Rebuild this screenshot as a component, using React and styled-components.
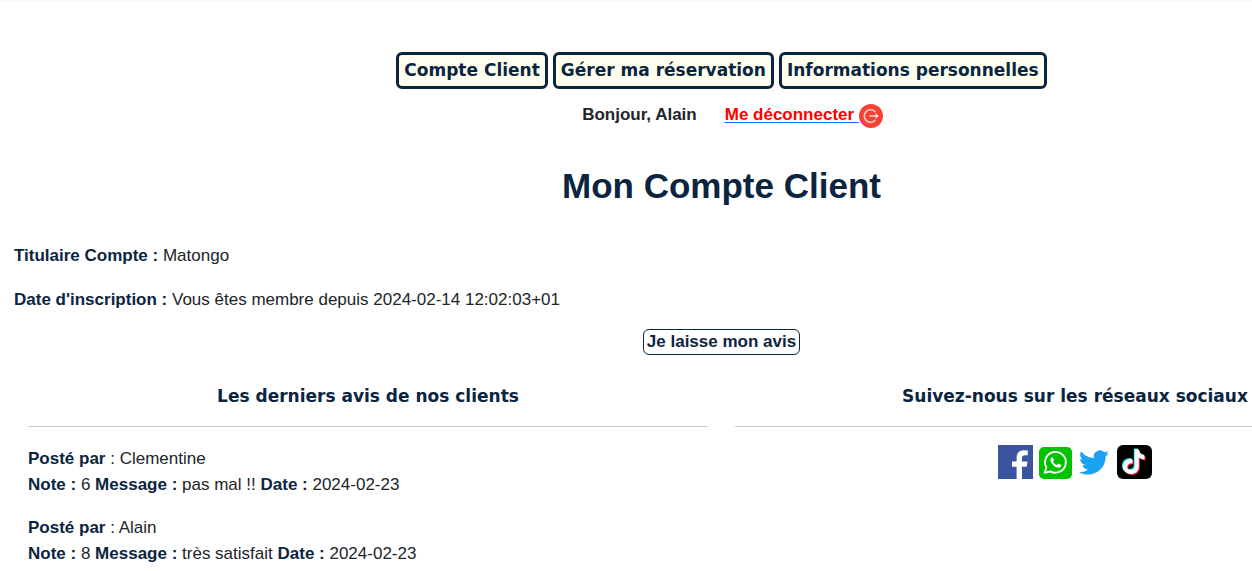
import React from "react";
import styled, { createGlobalStyle } from "styled-components";

const navy = "#0b2540";
const display = '"Arial Black", "DejaVu Sans", sans-serif';

const GlobalStyle = createGlobalStyle`
  *, *::before, *::after { box-sizing: border-box; }
  body {
    margin: 0;
    overflow-x: hidden;
    background: #fff;
    color: #212529;
    font-family: "Liberation Sans", Arial, sans-serif;
    font-size: 17px;
    line-height: 26px;
  }
`;

const Page = styled.div`
  width: calc(100% + 191px);
  border-top: 2px solid #f8f8f8;
  padding: 50px 14px 0;
`;

const Nav = styled.nav`
  display: flex;
  justify-content: center;
  gap: 5px;
`;

const NavButton = styled.button`
  padding: 2px 5px 3px;
  border: 3px solid ${navy};
  border-radius: 6px;
  background: #fffff0;
  color: ${navy};
  font: 900 17px/26px ${display};
`;

const Session = styled.div`
  display: flex;
  justify-content: center;
  align-items: center;
  gap: 28px;
  margin-top: 13px;
  padding-left: 22px;
  font-weight: 700;
`;

const Logout = styled.a`
  display: flex;
  align-items: center;
  color: #f00;
  text-decoration: none;

  span {
    white-space: pre;
    text-decoration: underline #0d6efd 1px;
    text-underline-offset: 2px;
  }

  svg { margin-top: 2px; }
`;

const Title = styled.h1`
  margin: 36px 0 0;
  color: ${navy};
  font-size: 35px;
  line-height: 44px;
  text-align: center;
`;

const Label = styled.strong`
  color: ${navy};
`;

const Details = styled.div`
  display: grid;
  gap: 18px;
  margin-top: 35px;
`;

const Line = styled.p`
  margin: 0;
`;

const ReviewButton = styled.button`
  display: block;
  margin: 16px auto 0;
  padding: 0 3px;
  border: 1px solid ${navy};
  border-radius: 6px;
  background: #fff;
  color: ${navy};
  font: 700 17px/24px "Liberation Sans", Arial, sans-serif;
`;

const Columns = styled.div`
  display: grid;
  grid-template-columns: 1fr 1fr;
  gap: 27px;
  margin-top: 28px;
  padding: 0 14px;
`;

const Heading = styled.h2`
  margin: 0 0 18px;
  padding-bottom: 17px;
  border-bottom: 1px solid #c8c9ca;
  color: ${navy};
  font: 900 17px/26px ${display};
  text-align: center;
`;

const Reviews = styled.div`
  display: grid;
  gap: 17px;
  margin-top: 19px;
`;

const Social = styled.div`
  display: flex;
  justify-content: center;
  gap: 5px;

  a { display: flex; }
`;

const reviews = [
  { author: "Clementine", note: 6, message: "pas mal !!", date: "2024-02-23" },
  { author: "Alain", note: 8, message: "très satisfait", date: "2024-02-23" },
];

const LogoutIcon = () => (
  <svg width="24" height="24" viewBox="0 0 24 24" aria-hidden="true">
    <circle cx="12" cy="12" r="12" fill="#f44336" />
    <path d="M16.6 8.2A6.3 6.3 0 1 0 16.6 15.8" fill="none" stroke="#ffc4be" strokeWidth="1.7" />
    <path d="M10.5 12H18" fill="none" stroke="#ffc4be" strokeWidth="1.7" />
    <path d="M16.6 9.3L19.8 12L16.6 14.7Z" fill="#ffe0dc" />
  </svg>
);

const FacebookIcon = () => (
  <svg width="35" height="35" viewBox="0 0 35 35" aria-hidden="true">
    <path d="M0 0H35V34H0Z" fill="#3a559f" />
    <path d="M18.6 34V21.8H14V16.6H18.6V13C18.6 8 21.4 5.3 25.8 5.3Q28 5.3 29.8 5.6V10.3H27C24.8 10.3 24 11.4 24 13.2V16.6H29.5L28.7 21.8H24V34Z" fill="#fff" />
  </svg>
);

const WhatsappIcon = () => (
  <svg width="35" height="35" viewBox="0 0 35 35" aria-hidden="true">
    <rect x="1" y="2" width="33" height="32" rx="5" fill="#00c300" />
    <path d="M6.8 27.8L8.4 22.4A10.4 10.4 0 1 1 12.3 26.3Z" fill="none" stroke="#fff" strokeWidth="1.9" strokeLinejoin="round" />
    <path d="M14.2 12.6Q13.2 12.6 12.6 13.8C11.6 16.4 15.2 21.7 19.6 22.6C22 23.1 23.5 21.8 23.3 20L20.5 18.6L19 20.1C17.2 19.4 15.7 18 15 16.4L16.1 15L15 12.7Z" fill="#fff" />
  </svg>
);

const TwitterIcon = () => (
  <svg width="34" height="35" viewBox="0 0 34 35" aria-hidden="true">
    <path transform="translate(1 2) scale(1.26)" d="M23.6 4.9C22.8 5.3 21.9 5.5 21 5.7C21.9 5.1 22.7 4.2 23 3.1C22.1 3.6 21.1 4 20.1 4.2A4.9 4.9 0 0 0 11.8 8.7C7.7 8.5 4 6.5 1.6 3.5C.3 5.7 1 8.6 3.1 10A4.9 4.9 0 0 1 .9 9.4C.9 11.7 2.5 13.8 4.9 14.3C4.1 14.5 3.4 14.5 2.7 14.4C3.3 16.4 5.1 17.8 7.3 17.8A9.9 9.9 0 0 1 0 19.8C8.7 25.2 21.4 19.5 21.2 7.4C22.1 6.7 22.9 5.9 23.6 4.9Z" fill="#1da1f2" />
  </svg>
);

const TiktokIcon = () => {
  const note = "M17.8 4.5H21.8C22.1 7.9 24.2 9.9 27.4 10.2V14.2C25.2 14.2 23.4 13.5 21.8 12.4V21.4C21.8 31.2 6 31.5 6 21.8C6 16.6 10.5 13.6 15.4 14.2V18.4C12.6 17.6 10.2 19.2 10.2 21.8C10.2 26.4 17.8 26.2 17.8 21Z";
  return (
    <svg width="35" height="35" viewBox="0 0 35 35" aria-hidden="true">
      <rect width="35" height="34" rx="6" fill="#000" />
      <path transform="translate(-1 -1)" d={note} fill="#25f4ee" />
      <path transform="translate(1 1)" d={note} fill="#fe2c55" />
      <path d={note} fill="#fff" />
    </svg>
  );
};

const networks = [
  ["Facebook", FacebookIcon],
  ["WhatsApp", WhatsappIcon],
  ["Twitter", TwitterIcon],
  ["TikTok", TiktokIcon],
];

export default function App() {
  return (
    <>
      <GlobalStyle />
      <Page>
        <Nav>
          <NavButton>Compte Client</NavButton>
          <NavButton>Gérer ma réservation</NavButton>
          <NavButton>Informations personnelles</NavButton>
        </Nav>
        <Session>
          <span>Bonjour, Alain</span>
          <Logout href="#logout"><span>{"Me déconnecter "}</span><LogoutIcon /></Logout>
        </Session>
        <main>
          <Title>Mon Compte Client</Title>
          <Details>
            <Line><Label>Titulaire Compte :</Label> Matongo</Line>
            <Line><Label>Date d'inscription :</Label> Vous êtes membre depuis 2024-02-14 12:02:03+01</Line>
          </Details>
          <ReviewButton>Je laisse mon avis</ReviewButton>
          <Columns>
            <section>
              <Heading>Les derniers avis de nos clients</Heading>
              <Reviews>
                {reviews.map((r) => (
                  <article key={r.author}>
                    <Line><Label>Posté par</Label> : {r.author}</Line>
                    <Line>
                      <Label>Note :</Label> {r.note} <Label>Message :</Label> {r.message} <Label>Date :</Label> {r.date}
                    </Line>
                  </article>
                ))}
              </Reviews>
            </section>
            <section>
              <Heading>Suivez-nous sur les réseaux sociaux</Heading>
              <Social>
                {networks.map(([name, Icon]) => (
                  <a key={name} href={"#" + name.toLowerCase()} aria-label={name}><Icon /></a>
                ))}
              </Social>
            </section>
          </Columns>
        </main>
      </Page>
    </>
  );
}
